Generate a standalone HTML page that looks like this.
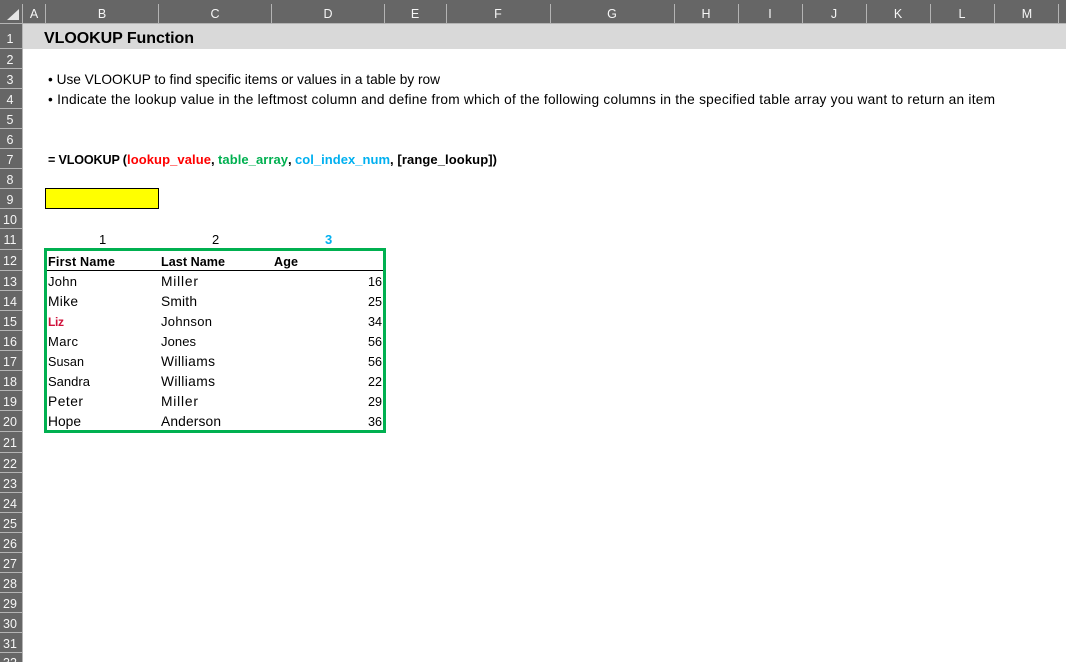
<!DOCTYPE html>
<html><head><meta charset="utf-8"><style>
html,body{margin:0;padding:0;background:#fff;width:1066px;height:662px;overflow:hidden}
svg{display:block;font-family:"Liberation Sans",sans-serif}
.h text{font-size:12.5px;fill:#f6f6f6;text-anchor:middle}
.t text{font-size:13px;fill:#000}
.t text.l{font-size:13.7px}
.t text.w{font-size:13.8px}
.t text.n{font-size:12.6px}
.t text.b{font-weight:bold}
</style></head><body>
<svg width="1066" height="662" viewBox="0 0 1066 662" xmlns="http://www.w3.org/2000/svg">
<rect width="1066" height="662" fill="#fff"/>
<rect x="23" y="24" width="1043" height="25" fill="#d9d9d9"/>
<rect width="1066" height="23" fill="#666"/>
<rect x="0" y="0" width="22" height="662" fill="#666"/>
<rect x="0" y="23" width="1066" height="1" fill="#b4b4b4"/>
<rect x="22" y="4" width="1" height="658" fill="#b4b4b4"/>
<polygon points="19,9 19,20 7,20" fill="#e6e6e6"/>
<g fill="#b4b4b4">
<rect x="45" y="4" width="1" height="19"/><rect x="158" y="4" width="1" height="19"/><rect x="271" y="4" width="1" height="19"/><rect x="384" y="4" width="1" height="19"/><rect x="446" y="4" width="1" height="19"/><rect x="550" y="4" width="1" height="19"/><rect x="674" y="4" width="1" height="19"/><rect x="738" y="4" width="1" height="19"/><rect x="802" y="4" width="1" height="19"/><rect x="866" y="4" width="1" height="19"/><rect x="930" y="4" width="1" height="19"/><rect x="994" y="4" width="1" height="19"/><rect x="1058" y="4" width="1" height="19"/>
<rect x="0" y="48" width="22" height="1"/><rect x="0" y="68" width="22" height="1"/><rect x="0" y="88" width="22" height="1"/><rect x="0" y="108" width="22" height="1"/><rect x="0" y="128" width="22" height="1"/><rect x="0" y="148" width="22" height="1"/><rect x="0" y="168" width="22" height="1"/><rect x="0" y="188" width="22" height="1"/><rect x="0" y="208" width="22" height="1"/><rect x="0" y="228" width="22" height="1"/><rect x="0" y="249" width="22" height="1"/><rect x="0" y="270" width="22" height="1"/><rect x="0" y="290" width="22" height="1"/><rect x="0" y="310" width="22" height="1"/><rect x="0" y="330" width="22" height="1"/><rect x="0" y="350" width="22" height="1"/><rect x="0" y="370" width="22" height="1"/><rect x="0" y="390" width="22" height="1"/><rect x="0" y="410" width="22" height="1"/><rect x="0" y="431" width="22" height="1"/><rect x="0" y="452" width="22" height="1"/><rect x="0" y="472" width="22" height="1"/><rect x="0" y="492" width="22" height="1"/><rect x="0" y="512" width="22" height="1"/><rect x="0" y="532" width="22" height="1"/><rect x="0" y="552" width="22" height="1"/><rect x="0" y="572" width="22" height="1"/><rect x="0" y="592" width="22" height="1"/><rect x="0" y="612" width="22" height="1"/><rect x="0" y="632" width="22" height="1"/><rect x="0" y="652" width="22" height="1"/>
</g>
<g class="h">
<text x="34" y="18">A</text><text x="102" y="18">B</text><text x="215" y="18">C</text><text x="328" y="18">D</text><text x="415" y="18">E</text><text x="498" y="18">F</text><text x="612" y="18">G</text><text x="706" y="18">H</text><text x="770" y="18">I</text><text x="834" y="18">J</text><text x="898" y="18">K</text><text x="962" y="18">L</text><text x="1027" y="18">M</text>
<text x="10" y="43">1</text><text x="10" y="64">2</text><text x="10" y="84">3</text><text x="10" y="104">4</text><text x="10" y="124">5</text><text x="10" y="144">6</text><text x="10" y="164">7</text><text x="10" y="184">8</text><text x="10" y="204">9</text><text x="10" y="224">10</text><text x="10" y="244">11</text><text x="10" y="265">12</text><text x="10" y="286">13</text><text x="10" y="306">14</text><text x="10" y="326">15</text><text x="10" y="346">16</text><text x="10" y="366">17</text><text x="10" y="386">18</text><text x="10" y="406">19</text><text x="10" y="426">20</text><text x="10" y="447">21</text><text x="10" y="468">22</text><text x="10" y="488">23</text><text x="10" y="508">24</text><text x="10" y="528">25</text><text x="10" y="548">26</text><text x="10" y="568">27</text><text x="10" y="588">28</text><text x="10" y="608">29</text><text x="10" y="628">30</text><text x="10" y="648">31</text><text x="10" y="667">32</text>
</g>
<g class="t">
<text x="44" y="43" class="b" style="font-size:16px" textLength="150">VLOOKUP Function</text>
<text x="48" y="84" class="l" textLength="392">• Use VLOOKUP to find specific items or values in a table by row</text>
<text x="48" y="104" class="l" textLength="947">• Indicate the lookup value in the leftmost column and define from which of the following columns in the specified table array you want to return an item</text>
<text x="48" y="164" class="b n" textLength="79">= VLOOKUP (</text>
<text x="127" y="164" class="b" style="fill:#ff0000" textLength="84">lookup_value</text>
<text x="211" y="164" class="b">,</text>
<text x="218" y="164" class="b" style="fill:#00b050" textLength="70">table_array</text>
<text x="288" y="164" class="b">,</text>
<text x="295" y="164" class="b" style="fill:#00b0f0" textLength="95">col_index_num</text>
<text x="390" y="164" class="b" textLength="107">, [range_lookup])</text>
<text x="99" y="244">1</text><text x="212" y="244">2</text><text x="325" y="244" class="b" style="fill:#00b0f0">3</text>
<text x="48" y="266" class="b n" textLength="67">First Name</text><text x="161" y="266" class="b n" textLength="64">Last Name</text><text x="274" y="266" class="b n" textLength="24">Age</text>
<text x="48" y="286" textLength="29">John</text><text x="161" y="286" class="w" textLength="37">Miller</text><text x="368" y="286" class="n" textLength="14">16</text>
<text x="48" y="306" class="w" textLength="30">Mike</text><text x="161" y="306" class="w" textLength="36">Smith</text><text x="368" y="306" class="n" textLength="14">25</text>
<text x="48" y="326" class="b" style="fill:#d0103a;font-size:12px" textLength="16">Liz</text><text x="161" y="326" textLength="51">Johnson</text><text x="368" y="326" class="n" textLength="14">34</text>
<text x="48" y="346" textLength="30">Marc</text><text x="161" y="346" textLength="35">Jones</text><text x="368" y="346" class="n" textLength="14">56</text>
<text x="48" y="366" class="n" textLength="36">Susan</text><text x="161" y="366" class="w" textLength="54">Williams</text><text x="368" y="366" class="n" textLength="14">56</text>
<text x="48" y="386" textLength="42">Sandra</text><text x="161" y="386" class="w" textLength="54">Williams</text><text x="368" y="386" class="n" textLength="14">22</text>
<text x="48" y="406" class="w" textLength="35">Peter</text><text x="161" y="406" class="w" textLength="37">Miller</text><text x="368" y="406" class="n" textLength="14">29</text>
<text x="48" y="426" class="w" textLength="33">Hope</text><text x="161" y="426" class="w" textLength="60">Anderson</text><text x="368" y="426" class="n" textLength="14">36</text>
</g>
<rect x="45.5" y="188.5" width="113" height="20" fill="#ffff00" stroke="#000" stroke-width="1"/>
<rect x="47" y="270" width="336" height="1" fill="#000"/>
<rect x="45.5" y="249.5" width="339" height="182" fill="none" stroke="#00b050" stroke-width="3"/>
</svg>
</body></html>
